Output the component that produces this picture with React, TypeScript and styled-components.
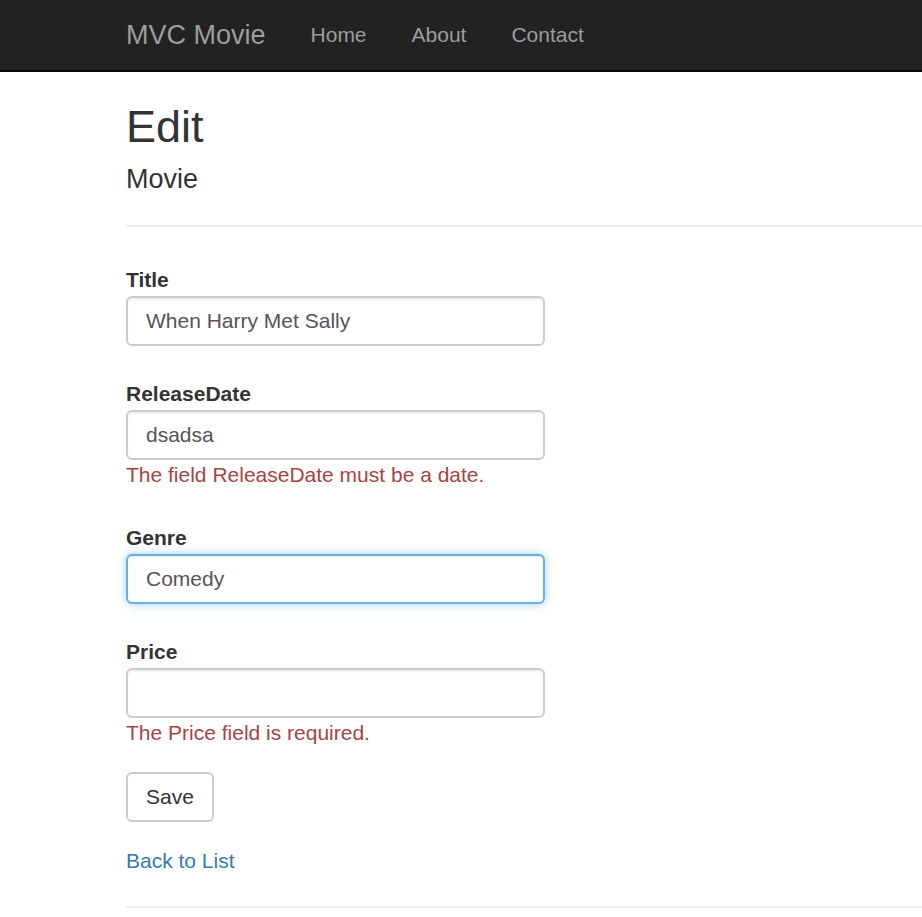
import React, { useEffect, useRef } from "react";
import styled, { createGlobalStyle, css } from "styled-components";

const GlobalStyle = createGlobalStyle`
  html, body {
    margin: 0;
    padding: 0;
    background: #fff;
  }
  body {
    font-family: "Liberation Sans", Arial, Helvetica, sans-serif;
    font-size: 21px;
    line-height: 30px;
    color: #333;
  }
  * {
    box-sizing: border-box;
  }
`;

const Navbar = styled.nav`
  height: 72px;
  background: #222;
  border-bottom: 2px solid #080808;
  display: flex;
  align-items: center;
  padding-left: 126px;
`;

const Brand = styled.a`
  font-size: 27px;
  line-height: 68px;
  color: #9d9d9d;
  text-decoration: none;
  padding-right: 22.5px;
`;

const NavList = styled.ul`
  display: flex;
  list-style: none;
  margin: 0;
  padding: 0;
`;

const NavLink = styled.a`
  display: block;
  font-size: 21px;
  line-height: 70px;
  padding: 0 22.5px;
  color: #9d9d9d;
  text-decoration: none;
`;

const Body = styled.main`
  padding-left: 126px;
`;

const PageTitle = styled.h2`
  font-size: 45px;
  font-weight: 500;
  line-height: 49.5px;
  margin: 29.5px 0 14px;
`;

const SubTitle = styled.h4`
  font-size: 27px;
  font-weight: 500;
  line-height: 29.7px;
  margin: 0;
`;

const Rule = styled.hr<{ $top: number; $bottom: number }>`
  border: 0;
  border-top: 2px solid #eee;
  margin: ${(p) => p.$top}px 0 ${(p) => p.$bottom}px;
  height: 0;
`;

const Form = styled.form`
  display: flex;
  flex-direction: column;
  width: 419px;
`;

const FormGroup = styled.div`
  display: flex;
  flex-direction: column;
  align-items: flex-start;
  margin-bottom: 24px;
`;

const Label = styled.label`
  display: block;
  font-weight: bold;
  line-height: 30px;
  margin: 9px 0 1px;
`;

const Input = styled.input<{ $focused?: boolean }>`
  display: block;
  width: 419px;
  height: 50px;
  padding: 0 18px;
  font-family: inherit;
  font-size: 21px;
  color: #555;
  background: #fff;
  border: 2px solid #ccc;
  border-radius: 6px;
  box-shadow: inset 0 1.5px 1.5px rgba(0, 0, 0, 0.075);
  outline: none;
  caret-color: #333;

  ${(p) =>
    p.$focused &&
    css`
      border-color: #66afe9;
      box-shadow: inset 0 1.5px 1.5px rgba(0, 0, 0, 0.075),
        0 0 10px rgba(102, 175, 233, 0.6);
    `}
`;

const FieldError = styled.span`
  display: block;
  color: #a94442;
  line-height: 30px;
`;

const Button = styled.button`
  height: 50px;
  padding: 0 18px;
  font-family: inherit;
  font-size: 21px;
  color: #333;
  background: #fff;
  border: 2px solid #ccc;
  border-radius: 6px;
  cursor: pointer;
`;

const BackLink = styled.a`
  display: block;
  color: #337ab7;
  text-decoration: none;
  line-height: 30px;
`;

type Field = {
  name: string;
  value: string;
  error?: string;
  focused?: boolean;
};

const fields: Field[] = [
  { name: "Title", value: "When Harry Met Sally" },
  { name: "ReleaseDate", value: "dsadsa", error: "The field ReleaseDate must be a date." },
  { name: "Genre", value: "Comedy", focused: true },
  { name: "Price", value: "", error: "The Price field is required." },
];

const FieldInput = ({ field }: { field: Field }) => {
  const ref = useRef<HTMLInputElement>(null);

  useEffect(() => {
    if (field.focused && ref.current) {
      const el = ref.current;
      el.focus();
      el.setSelectionRange(el.value.length, el.value.length);
    }
  }, [field.focused]);

  return (
    <Input
      ref={ref}
      id={field.name}
      type="text"
      defaultValue={field.value}
      $focused={field.focused}
    />
  );
};

export default function App() {
  return (
    <>
      <GlobalStyle />
      <Navbar>
        <Brand href="#">MVC Movie</Brand>
        <NavList>
          <li><NavLink href="#">Home</NavLink></li>
          <li><NavLink href="#">About</NavLink></li>
          <li><NavLink href="#">Contact</NavLink></li>
        </NavList>
      </Navbar>
      <Body>
        <PageTitle>Edit</PageTitle>
        <SubTitle>Movie</SubTitle>
        <Rule $top={30} $bottom={29} />
        <Form onSubmit={(e) => e.preventDefault()}>
          {fields.map((f) => (
            <FormGroup key={f.name}>
              <Label htmlFor={f.name}>{f.name}</Label>
              <FieldInput field={f} />
              {f.error && <FieldError>{f.error}</FieldError>}
            </FormGroup>
          ))}
          <FormGroup>
            <Button type="submit">Save</Button>
          </FormGroup>
        </Form>
        <BackLink href="#">Back to List</BackLink>
        <Rule $top={30} $bottom={0} />
      </Body>
    </>
  );
}
